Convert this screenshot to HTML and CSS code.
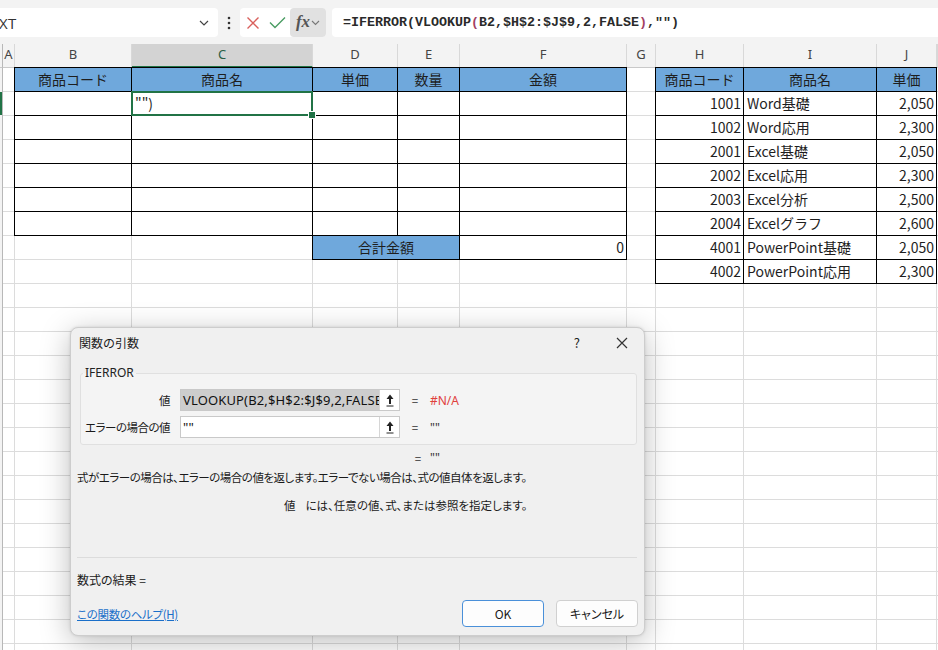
FILE: index.html
```html
<!DOCTYPE html>
<html lang="ja">
<head>
<meta charset="utf-8">
<title>関数の引数</title>
<link rel="stylesheet" href="styles.css">
</head>
<body>
<div class="app">
  <header class="fbar">
    <div class="namebox">
      <span class="nb-text">XT</span>
      <svg class="chev" width="10" height="6" viewBox="0 0 10 6"><path d="M1 1l4 4 4-4" fill="none" stroke="#444" stroke-width="1.2"/></svg>
    </div>
    <div class="vdots"><svg width="4" height="14" viewBox="0 0 4 14" fill="#333"><circle cx="2" cy="2" r="1.3"/><circle cx="2" cy="7" r="1.3"/><circle cx="2" cy="12" r="1.3"/></svg></div>
    <div class="btngroup">
      <span class="fb-ic"><svg width="14" height="14" viewBox="0 0 14 14"><path d="M1.5 1.5l11 11M12.5 1.5l-11 11" stroke="#d9605c" stroke-width="1.4" fill="none"/></svg></span>
      <span class="fb-ic"><svg width="17" height="13" viewBox="0 0 17 13"><path d="M1 6.5l5 5L16 1.5" stroke="#4a9d63" stroke-width="1.4" fill="none"/></svg></span>
      <span class="fx"><i>fx</i><svg width="9" height="6" viewBox="0 0 9 6"><path d="M1 1l3.5 3.5L8 1" fill="none" stroke="#777" stroke-width="1.1"/></svg></span>
    </div>
    <div class="formula">=IFERROR(VLOOKUP<span class="paren">(</span>B2,$H$2:$J$9,2,FALSE<span class="paren">)</span>,"")</div>
  </header>

  <div class="colheads">
    <div class="ch corner"></div>
    <div class="ch">A</div>
    <div class="ch">B</div>
    <div class="ch active">C</div>
    <div class="ch">D</div>
    <div class="ch">E</div>
    <div class="ch">F</div>
    <div class="ch">G</div>
    <div class="ch">H</div>
    <div class="ch">I</div>
    <div class="ch">J</div>
    <div class="ch"></div>
  </div>

  <div class="sheet">
    <div class="rowsel"></div>

    <div class="ltable">
      <div class="c hd">商品コード</div><div class="c hd">商品名</div><div class="c hd">単価</div><div class="c hd">数量</div><div class="c hd">金額</div>
      <div class="c"></div><div class="c sel">"")</div><div class="c"></div><div class="c"></div><div class="c"></div>
      <div class="c"></div><div class="c"></div><div class="c"></div><div class="c"></div><div class="c"></div>
      <div class="c"></div><div class="c"></div><div class="c"></div><div class="c"></div><div class="c"></div>
      <div class="c"></div><div class="c"></div><div class="c"></div><div class="c"></div><div class="c"></div>
      <div class="c"></div><div class="c"></div><div class="c"></div><div class="c"></div><div class="c"></div>
      <div class="c"></div><div class="c"></div><div class="c"></div><div class="c"></div><div class="c"></div>
    </div>

    <div class="ttable">
      <div class="c hd">合計金額</div><div class="c num">0</div>
    </div>

    <div class="rtable">
      <div class="c hd">商品コード</div><div class="c hd">商品名</div><div class="c hd">単価</div>
      <div class="c num">1001</div><div class="c">Word基礎</div><div class="c num">2,050</div>
      <div class="c num">1002</div><div class="c">Word応用</div><div class="c num">2,300</div>
      <div class="c num">2001</div><div class="c">Excel基礎</div><div class="c num">2,050</div>
      <div class="c num">2002</div><div class="c">Excel応用</div><div class="c num">2,300</div>
      <div class="c num">2003</div><div class="c">Excel分析</div><div class="c num">2,500</div>
      <div class="c num">2004</div><div class="c">Excelグラフ</div><div class="c num">2,600</div>
      <div class="c num">4001</div><div class="c">PowerPoint基礎</div><div class="c num">2,050</div>
      <div class="c num">4002</div><div class="c">PowerPoint応用</div><div class="c num">2,300</div>
    </div>
  </div>

  <div class="dialog" role="dialog">
    <div class="dlg-title">
      <span class="dlg-name">関数の引数</span>
      <div class="dlg-ctrls">
        <span class="dlg-btn help">?</span>
        <span class="dlg-btn"><svg width="12" height="12" viewBox="0 0 12 12"><path d="M1 1l10 10M11 1L1 11" stroke="#333" stroke-width="1.2" fill="none"/></svg></span>
      </div>
    </div>

    <fieldset class="args">
      <legend>IFERROR</legend>
      <div class="arg">
        <span class="arg-label">値</span>
        <div class="field">
          <span class="field-val selected">VLOOKUP(B2,$H$2:$J$9,2,FALSE)</span>
          <span class="field-ref"><svg width="8" height="13" viewBox="0 0 8 13"><path d="M4 0.5L7.5 5H5v5H3V5H0.5z" fill="#222"/><path d="M0.5 12h7" stroke="#222" stroke-width="1"/></svg></span>
        </div>
        <span class="eq">=</span>
        <span class="arg-res err">#N/A</span>
      </div>
      <div class="arg">
        <span class="arg-label">エラーの場合の値</span>
        <div class="field">
          <span class="field-val">""</span>
          <span class="field-ref"><svg width="8" height="13" viewBox="0 0 8 13"><path d="M4 0.5L7.5 5H5v5H3V5H0.5z" fill="#222"/><path d="M0.5 12h7" stroke="#222" stroke-width="1"/></svg></span>
        </div>
        <span class="eq">=</span>
        <span class="arg-res">""</span>
      </div>
    </fieldset>

    <div class="fn-res"><span class="eq">=</span><span class="arg-res">""</span></div>
    <p class="desc">式がエラーの場合は、エラーの場合の値を返します。エラーでない場合は、式の値自体を返します。</p>
    <p class="argdesc"><span class="argname">値</span>には、任意の値、式、または参照を指定します。</p>

    <div class="sep"></div>
    <div class="formula-res">数式の結果 =</div>

    <div class="dlg-foot">
      <a class="help-link" href="#">この関数のヘルプ(H)</a>
      <div class="dlg-btns">
        <button class="btn primary">OK</button>
        <button class="btn">キャンセル</button>
      </div>
    </div>
  </div>
</div>
</body>
</html>
```

FILE: styles.css
```css
* { box-sizing: border-box; margin: 0; padding: 0; }
html, body { width: 938px; height: 650px; overflow: hidden; background: #fff; }
body {
  font-family: "Noto Sans CJK JP", "Noto Sans", sans-serif;
  color: #222;
}
.app { position: relative; width: 938px; height: 650px; overflow: hidden; }

/* ---------- formula bar ---------- */
.fbar {
  height: 44px;
  background: #f3f3f3;
  display: flex;
  align-items: flex-start;
  padding-top: 8px;
}
.fbar > * { flex: none; }
.namebox {
  width: 228px;
  margin-left: -10px;
  height: 29px;
  background: #fff;
  border-radius: 4px;
  display: flex;
  align-items: center;
  justify-content: space-between;
  padding: 0 9px 0 9px;
}
.nb-text {
  font-family: "Open Sans", "Noto Sans", sans-serif;
  font-size: 15px;
  color: #333;
  letter-spacing: 0.3px;
}
.chev { display: block; }
.vdots {
  width: 22px;
  height: 29px;
  display: flex;
  align-items: center;
  justify-content: center;
}
.vdots svg { display: block; }
.btngroup {
  width: 86px;
  height: 29px;
  background: #fff;
  border-radius: 4px;
  display: flex;
  align-items: center;
}
.fb-ic {
  width: 24px;
  height: 29px;
  display: flex;
  align-items: center;
  justify-content: center;
}
.fb-ic:first-child { margin-left: 1px; }
.fx {
  margin-left: 1px;
  width: 36px;
  height: 29px;
  background: #e1e1e1;
  border-radius: 4px;
  display: flex;
  align-items: center;
  justify-content: center;
  gap: 1px;
}
.fx i {
  font-family: "Liberation Serif", "DejaVu Serif", serif;
  font-style: italic;
  font-weight: bold;
  font-size: 17px;
  color: #555;
  line-height: 1;
  margin-top: -2px;
}
.formula {
  margin-left: 6px;
  width: 640px;
  height: 29px;
  background: #fff;
  border-radius: 4px;
  padding-left: 11px;
  font-family: "Liberation Mono", "DejaVu Sans Mono", monospace;
  font-weight: bold;
  font-size: 13.33px;
  line-height: 29px;
  color: #2a2a2a;
  white-space: nowrap;
}
.paren { color: #a33f63; }

/* ---------- column headers ---------- */
.colheads, .sheet {
  display: grid;
  grid-template-columns: 3px 12px 117px 181px 85px 62px 167px 29px 88px 133px 60px 1fr;
}
.colheads {
  height: 24px;
  background: #f3f3f3;
}
.ch {
  border-right: 1px solid #d8d8d8;
  border-bottom: 1px solid #c9c9c9;
  font-family: "Noto Sans", "Open Sans", sans-serif;
  font-size: 13px;
  color: #444;
  display: flex;
  align-items: center;
  justify-content: center;
  padding-bottom: 3px;
}
.ch.corner { border-right-color: #b8b8b8; }
.ch.active {
  background: #d3d3d3;
  border-bottom: 2px solid #217346;
  color: #2a5e46;
  padding-bottom: 2px;
}

/* ---------- sheet ---------- */
.sheet {
  grid-template-rows: repeat(25, 24px);
  height: 582px;
  background:
    linear-gradient(#b8b8b8, #b8b8b8) 2px 0 / 1px 100% no-repeat,
    linear-gradient(#f3f3f3, #f3f3f3) 0 0 / 2px 100% no-repeat,
    linear-gradient(#dcdcdc, #dcdcdc) 14px 0 / 1px 100% no-repeat,
    linear-gradient(#dcdcdc, #dcdcdc) 131px 0 / 1px 100% no-repeat,
    linear-gradient(#dcdcdc, #dcdcdc) 312px 0 / 1px 100% no-repeat,
    linear-gradient(#dcdcdc, #dcdcdc) 397px 0 / 1px 100% no-repeat,
    linear-gradient(#dcdcdc, #dcdcdc) 459px 0 / 1px 100% no-repeat,
    linear-gradient(#dcdcdc, #dcdcdc) 626px 0 / 1px 100% no-repeat,
    linear-gradient(#dcdcdc, #dcdcdc) 655px 0 / 1px 100% no-repeat,
    linear-gradient(#dcdcdc, #dcdcdc) 743px 0 / 1px 100% no-repeat,
    linear-gradient(#dcdcdc, #dcdcdc) 876px 0 / 1px 100% no-repeat,
    linear-gradient(#dcdcdc, #dcdcdc) 936px 0 / 1px 100% no-repeat,
    repeating-linear-gradient(to bottom, transparent 0 23px, #dcdcdc 23px 24px);
}
.rowsel {
  grid-column: 1;
  grid-row: 2;
  width: 2px;
  background: #217346;
  margin-bottom: 1px;
}
.ltable, .ttable, .rtable {
  display: grid;
  grid-auto-rows: 24px;
  margin-left: -1px;
  border-left: 1px solid #000;
}
.ltable {
  grid-column: 3 / 8;
  grid-row: 1 / 8;
  grid-template-columns: 117px 181px 85px 62px 167px;
  margin-top: -1px;
  border-top: 1px solid #000;
}
.ttable {
  grid-column: 5 / 8;
  grid-row: 8;
  grid-template-columns: 147px 167px;
}
.rtable {
  grid-column: 9 / 12;
  grid-row: 1 / 10;
  grid-template-columns: 88px 133px 60px;
  margin-top: -1px;
  border-top: 1px solid #000;
}
.c {
  background: #fff;
  border-right: 1px solid #000;
  border-bottom: 1px solid #000;
  font-size: 14px;
  line-height: 23px;
  padding: 0 3px;
  white-space: nowrap;
  overflow: hidden;
  color: #1e1e1e;
}
.c.hd { background: #6fa8dc; text-align: center; }
.c.num { text-align: right; padding-right: 2px; }
.c.sel { position: relative; overflow: visible; }
.c.sel::after {
  content: "";
  position: absolute;
  left: -1px; top: -1px; right: -1px; bottom: -1px;
  border: 2px solid #217346;
}
.c.sel::before {
  content: "";
  position: absolute;
  right: -4px; bottom: -4px;
  width: 6px; height: 6px;
  background: #217346;
  border: 1px solid #fff;
  z-index: 1;
}

/* ---------- dialog ---------- */
.dialog {
  position: absolute;
  left: 70px;
  top: 327px;
  width: 575px;
  height: 309px;
  background: #f0f0f0;
  border: 1px solid #cdcdcd;
  border-radius: 8px;
  box-shadow: 0 6px 30px rgba(0, 0, 0, 0.26), 0 0 3px rgba(0, 0, 0, 0.12);
  font-size: 11.5px;
  letter-spacing: -0.5px;
  color: #1a1a1a;
  font-feature-settings: "palt";
  display: flex;
  flex-direction: column;
  z-index: 5;
}
.dlg-title {
  height: 29px;
  display: flex;
  align-items: center;
  justify-content: space-between;
  padding-left: 8px;
}
.dlg-name { font-size: 12px; letter-spacing: 0; font-feature-settings: normal; }
.dlg-ctrls { display: flex; }
.dlg-btn {
  width: 45px;
  height: 29px;
  display: flex;
  align-items: center;
  justify-content: center;
  font-size: 13px;
  color: #222;
}
.args {
  margin: 8px 7px 0 9px;
  border: 1px solid #e0e0e0;
  border-radius: 3px;
  background: #f4f4f4;
  padding: 8px 0 6px 0;
}
.args legend {
  margin-left: 2px;
  padding: 0 2px;
  line-height: 16px;
  font-size: 12px;
  letter-spacing: 0;
  color: #222;
  font-family: "Noto Sans", "Noto Sans CJK JP", sans-serif;
}
.arg {
  display: flex;
  align-items: center;
  height: 22px;
}
.arg + .arg { margin-top: 5px; }
.arg-label {
  width: 89px;
  text-align: right;
  white-space: nowrap;
}
.field {
  margin-left: 10px;
  width: 220px;
  height: 22px;
  background: #fff;
  border: 1px solid #c9c9c9;
  display: flex;
}
.field-val {
  flex: 1;
  min-width: 0;
  overflow: hidden;
  white-space: nowrap;
  padding-left: 2px;
  line-height: 20px;
  font-family: "Noto Sans", "Noto Sans CJK JP", sans-serif;
  font-size: 13px;
  letter-spacing: 0.15px;
  color: #111;
}
.field-val.selected { background: #cdcdcd; }
.field-ref {
  width: 20px;
  flex: none;
  border-left: 1px solid #d6d6d6;
  display: flex;
  align-items: center;
  justify-content: center;
}
.eq {
  margin-left: 11px;
  width: 8px;
  text-align: center;
  color: #333;
  letter-spacing: 0;
}
.arg-res { margin-left: 11px; color: #333; letter-spacing: 0; font-family: "Noto Sans", "Noto Sans CJK JP", sans-serif; font-size: 12px; }
.arg-res.err { color: #e0403c; }
.fn-res {
  display: flex;
  margin-top: 5px;
  padding-left: 343px;
  line-height: 16px;
}
.fn-res .eq { margin-left: 0; }
.fn-res .arg-res { margin-left: 8px; }
.desc {
  margin-top: 3px;
  padding-left: 6px;
  line-height: 16px;
}
.argdesc {
  margin-top: 12px;
  padding-left: 213px;
  line-height: 16px;
  letter-spacing: 0;
}
.argname { margin-right: 10px; }
.sep {
  margin: 44px 7px 0 6px;
  height: 1px;
  background: #dcdcdc;
}
.formula-res {
  margin-top: 14px;
  padding-left: 6px;
  line-height: 16px;
  font-size: 12px;
  letter-spacing: 0;
}
.dlg-foot {
  margin-top: 12px;
  display: flex;
  align-items: center;
  justify-content: space-between;
  padding: 0 6px;
}
.help-link {
  color: #1a6fc9;
  text-decoration: underline;
  font-size: 11.5px;
  letter-spacing: -0.3px;
}
.dlg-btns { display: flex; gap: 12px; }
.btn {
  width: 82px;
  height: 27px;
  background: #fdfdfd;
  border: 1px solid #d0d0d0;
  border-radius: 4px;
  font-family: "Noto Sans CJK JP", "Noto Sans", sans-serif;
  font-size: 12px;
  color: #1a1a1a;
  font-feature-settings: "palt";
}
.btn.primary { border-color: #4a90d9; }
```
